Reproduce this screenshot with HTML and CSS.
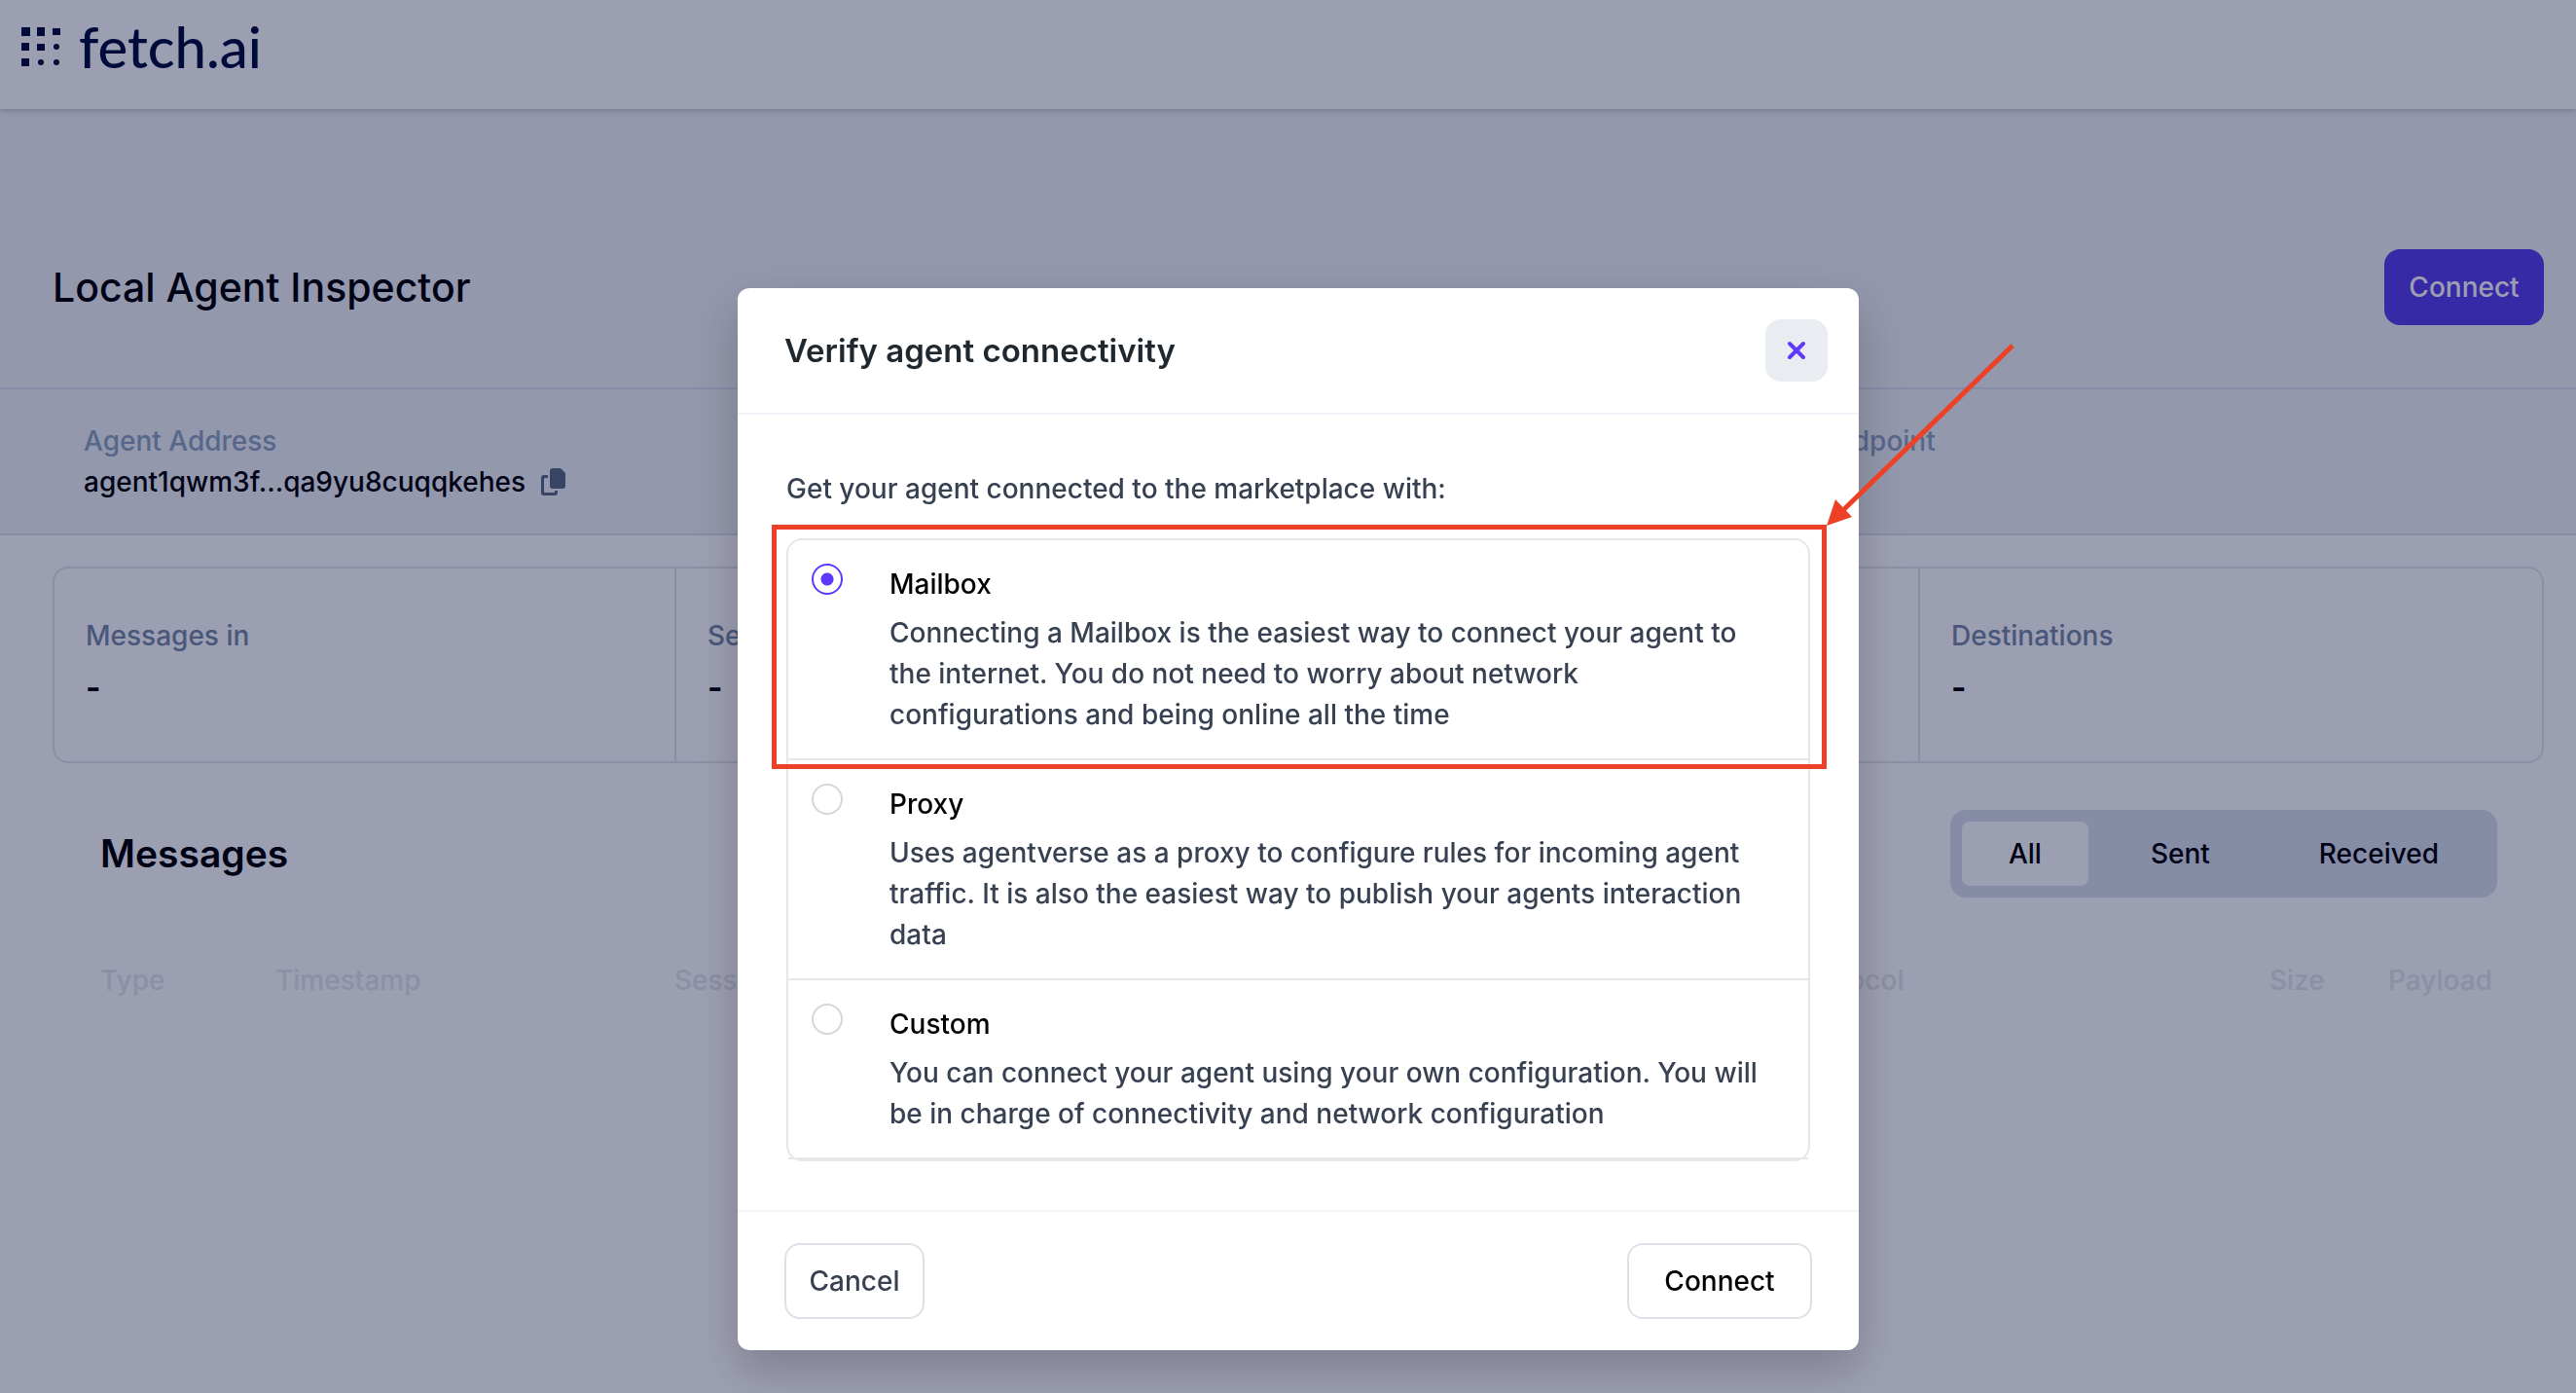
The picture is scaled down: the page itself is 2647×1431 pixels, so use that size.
FILE: index.html
```html
<!DOCTYPE html>
<html lang="en">
<head>
  <meta charset="utf-8">
  <meta name="viewport" content="width=device-width, initial-scale=1">
  <title>Local Agent Inspector</title>
  <link rel="stylesheet" href="styles.css">
</head>
<body>
  <header class="topbar">
    <a class="brand" href="#">
      <svg class="brand-mark" viewBox="0 0 40 40" aria-hidden="true">
        <path d="M0 0h9v9H0zM16 0h8v9h-8zM32 1h8v7h-8zM0 16h8v8H0zM16 17h8v7h-8zM0 32h8v8H0z"/>
        <circle cx="36" cy="20" r="3"/>
        <circle cx="20" cy="36" r="3"/>
        <circle cx="36" cy="36" r="3"/>
      </svg>
      <span class="brand-name">fetch.ai</span>
    </a>
  </header>

  <main>
    <section class="title-row">
      <h1 class="page-title">Local Agent Inspector</h1>
      <button class="btn btn-primary" type="button">Connect</button>
    </section>

    <section class="agent-info">
      <div class="info-item">
        <span class="info-label">Agent Address</span>
        <span class="info-value">agent1qwm3f...qa9yu8cuqqkehes
          <button class="copy" type="button" aria-label="Copy address">
            <svg viewBox="0 0 26 28" aria-hidden="true">
              <path d="M12 0h8l5 5v13a3 3 0 0 1-3 3H12a3 3 0 0 1-3-3V3a3 3 0 0 1 3-3z"/>
              <path d="M7 7v3H4a1 1 0 0 0-1 1v13a1 1 0 0 0 1 1h9a1 1 0 0 0 1-1v-1h3v2a3 3 0 0 1-3 3H3a3 3 0 0 1-3-3V10a3 3 0 0 1 3-3z"/>
            </svg>
          </button>
        </span>
      </div>
      <div class="info-item">
        <span class="info-label">Endpoint</span>
      </div>
    </section>

    <section class="stats">
      <div class="stat"><span class="stat-label">Messages in</span><span class="stat-value">-</span></div>
      <div class="stat"><span class="stat-label">Sessions</span><span class="stat-value">-</span></div>
      <div class="stat"><span class="stat-label">Senders</span><span class="stat-value">-</span></div>
      <div class="stat"><span class="stat-label">Destinations</span><span class="stat-value">-</span></div>
    </section>

    <section class="messages">
      <div class="messages-head">
        <h2 class="messages-title">Messages</h2>
        <div class="tabs">
          <button class="tab tab-active" type="button">All</button>
          <button class="tab" type="button">Sent</button>
          <button class="tab" type="button">Received</button>
        </div>
      </div>
      <table class="messages-table">
        <thead>
          <tr>
            <th class="col-type">Type</th>
            <th class="col-time">Timestamp</th>
            <th class="col-session">Session</th>
            <th>Protocol</th>
            <th class="col-size">Size</th>
            <th class="col-payload">Payload</th>
          </tr>
        </thead>
      </table>
    </section>
  </main>

  <div class="overlay">
    <form class="modal" role="dialog" aria-modal="true" aria-labelledby="modal-title">
      <div class="modal-head">
        <h2 class="modal-title" id="modal-title">Verify agent connectivity</h2>
        <button class="close" type="button" aria-label="Close">
          <svg viewBox="0 0 20 20" aria-hidden="true"><path d="M3 3l14 14M17 3L3 17"/></svg>
        </button>
      </div>

      <div class="modal-body">
        <p class="lead">Get your agent connected to the marketplace with:</p>
        <div class="options">
          <div class="option">
            <input class="radio" type="radio" name="mode" id="mailbox" checked>
            <label class="option-text" for="mailbox">
              <span class="option-name">Mailbox</span>
              <span class="option-desc">Connecting a Mailbox is the easiest way to connect your agent to<br>the internet. You do not need to worry about network<br>configurations and being online all the time</span>
            </label>
            <div class="highlight">
              <svg class="arrow" viewBox="0 0 200 190" aria-hidden="true">
                <path class="arrow-shaft" d="M191 5L16 175"/>
                <path class="arrow-head" d="M0 190L9 163L26 181z"/>
              </svg>
            </div>
          </div>
          <div class="option">
            <input class="radio" type="radio" name="mode" id="proxy">
            <label class="option-text" for="proxy">
              <span class="option-name">Proxy</span>
              <span class="option-desc">Uses agentverse as a proxy to configure rules for incoming agent<br>traffic. It is also the easiest way to publish your agents interaction<br>data</span>
            </label>
          </div>
          <div class="option">
            <input class="radio" type="radio" name="mode" id="custom">
            <label class="option-text" for="custom">
              <span class="option-name">Custom</span>
              <span class="option-desc">You can connect your agent using your own configuration. You will<br>be in charge of connectivity and network configuration</span>
            </label>
          </div>
        </div>
      </div>

      <div class="modal-foot">
        <button class="btn btn-cancel" type="button">Cancel</button>
        <button class="btn btn-confirm" type="submit">Connect</button>
      </div>
    </form>
  </div>
</body>
</html>
```

FILE: styles.css
```css
* {
  box-sizing: border-box;
}

body {
  margin: 0;
  min-height: 100vh;
  background: #fff;
  color: #000;
  font-family: Inter, "Liberation Sans", sans-serif;
  font-size: 28px;
  line-height: 42px;
  font-weight: 500;
}

h1, h2, p {
  margin: 0;
}

button {
  font: inherit;
  color: inherit;
  border: 0;
  background: none;
  cursor: pointer;
}

/* Top bar */
.topbar {
  position: relative;
  display: flex;
  align-items: center;
  height: 112px;
  padding: 0 22px 16px;
  background: #fff;
  box-shadow: 0 1px 6px rgba(0, 0, 0, 0.25);
}

.brand {
  display: flex;
  align-items: center;
  gap: 19px;
  color: #000c3d;
  text-decoration: none;
}

.brand-mark {
  width: 40px;
  height: 40px;
  fill: currentColor;
}

.brand-name {
  font-family: Lato, sans-serif;
  font-size: 58px;
  line-height: 56px;
}

/* Title row */
.title-row {
  display: flex;
  align-items: center;
  justify-content: space-between;
  padding: 144px 33px 64px 54px;
  background: #f0f3f5;
}

.page-title {
  font-size: 41px;
  line-height: 48px;
  font-weight: 500;
}

.btn {
  height: 78px;
  border-radius: 16px;
}

.btn-primary {
  width: 164px;
  background: #5c3eec;
  color: #fff;
}

/* Agent details */
.agent-info {
  display: grid;
  grid-template-columns: 706fr 294fr;
  padding: 32px 34px 32px 86px;
  background: #f0f3f5;
  border-top: 2px solid #dcdfec;
  border-bottom: 2px solid #dcdfec;
}

.info-item {
  display: flex;
  flex-direction: column;
}

.info-label {
  color: #8da4be;
}

.info-value {
  display: flex;
  align-items: center;
  gap: 16px;
}

.copy {
  display: flex;
  padding: 0;
}

.copy svg {
  width: 26px;
  height: 28px;
  fill: #5c6b84;
}

/* Counters */
.stats {
  display: grid;
  grid-template-columns: repeat(4, 1fr);
  margin: 32px 33px 0 54px;
  border: 2px solid #e4e4e8;
  border-radius: 16px;
}

.stat {
  display: flex;
  flex-direction: column;
  gap: 8px;
  padding: 48px 32px 52px;
}

.stat:not(:last-child) {
  border-right: 2px solid #e4e4e8;
}

.stat-label {
  color: #768aa4;
}

.stat-value {
  font-size: 33px;
  line-height: 48px;
  font-weight: 700;
}

/* Messages */
.messages {
  padding: 48px 81px 0 103px;
}

.messages-head {
  display: flex;
  align-items: center;
  justify-content: space-between;
}

.messages-title {
  font-size: 39px;
  line-height: 48px;
  font-weight: 600;
}

.tabs {
  display: flex;
  gap: 16px;
  padding: 12px;
  border-radius: 16px;
  background: #dcdfec;
}

.tab {
  height: 66px;
  padding: 0 48px;
  border-radius: 8px;
}

.tab-active {
  background: #fff;
}

.messages-table {
  width: 100%;
  margin-top: 64px;
  border-collapse: collapse;
  table-layout: fixed;
}

.messages-table th {
  padding: 0;
  color: #e4e6e9;
  font-weight: 500;
  text-align: left;
}

.col-type {
  width: 180px;
}

.col-time {
  width: 410px;
}

.col-session {
  width: 1152px;
}

.col-size {
  width: 122px;
}

.col-payload {
  width: 112px;
}

/* Dialog */
.overlay {
  position: fixed;
  inset: 0;
  display: flex;
  align-items: flex-start;
  justify-content: center;
  padding: 296px 0 0 21px;
  background: rgba(0, 8, 56, 0.39);
}

.modal {
  width: 100%;
  max-width: 1152px;
  border-radius: 12px;
  background: #fff;
  box-shadow: 0 20px 48px rgba(0, 0, 0, 0.2);
}

.modal-head {
  display: flex;
  align-items: center;
  justify-content: space-between;
  padding: 32px 32px 32px 48px;
  border-bottom: 2px solid #f3f4f9;
}

.modal-title {
  color: #1f272f;
  font-size: 33px;
  line-height: 48px;
  font-weight: 600;
}

.close {
  display: grid;
  place-items: center;
  width: 64px;
  height: 64px;
  border-radius: 16px;
  background: #e9ecf1;
}

.close svg {
  width: 20px;
  height: 20px;
  fill: none;
  stroke: #5f38fb;
  stroke-width: 4;
  stroke-linecap: round;
}

.modal-body {
  padding: 55px 50px 50px;
}

.lead {
  margin-bottom: 30px;
  color: #374151;
}

.options {
  border: 2px solid #e5e7eb;
  border-radius: 16px;
}

.option {
  position: relative;
  display: flex;
  align-items: flex-start;
  gap: 48px;
  padding: 24px;
  border-bottom: 2px solid #e5e7eb;
}

.radio {
  appearance: none;
  flex: none;
  width: 32px;
  height: 32px;
  margin: 0;
  border: 2px solid #d5d6da;
  border-radius: 50%;
  background: #fff;
}

.radio:checked {
  border-color: #5f38fb;
  background: radial-gradient(circle, #5f38fb 6px, #fff 7px);
}

.option-text {
  display: flex;
  flex-direction: column;
  gap: 8px;
  white-space: nowrap;
}

.option-desc {
  color: #374151;
}

/* Callout around the recommended option */
.highlight {
  position: absolute;
  inset: -16px -19px -11px -17px;
  z-index: 1;
  border: 5px solid #ec4126;
  pointer-events: none;
}

.arrow {
  position: absolute;
  left: 100%;
  bottom: 100%;
  width: 200px;
  height: 190px;
  margin-left: 5px;
  margin-bottom: 4px;
}

.arrow-shaft {
  fill: none;
  stroke: #ec4126;
  stroke-width: 5;
}

.arrow-head {
  fill: #ec4126;
}

.modal-foot {
  display: flex;
  justify-content: space-between;
  padding: 32px 48px;
  border-top: 2px solid #f3f4f9;
}

.btn-cancel,
.btn-confirm {
  border: 2px solid #dde1e8;
  background: #fff;
}

.btn-cancel {
  width: 144px;
  color: #374151;
}

.btn-confirm {
  width: 190px;
}
```
